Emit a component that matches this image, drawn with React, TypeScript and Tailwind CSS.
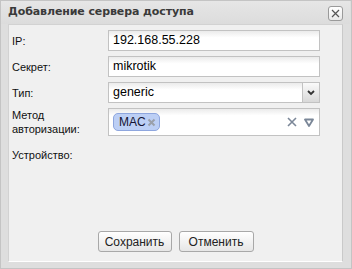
import React from "react";

// Dialog: "add access server"

function Field({ value }: { value: string }) {
  return (
    <div className="h-[21px] flex-1 border border-[#c2c2c2] bg-linear-to-b from-[#ebebeb] to-white to-[35%] flex items-center pl-[4px] text-[12.5px] text-black">
      {value}
    </div>
  );
}

function Row({ label, children }: { label: React.ReactNode; children: React.ReactNode }) {
  return (
    <div className="flex items-center">
      <div className="w-[96px] shrink-0 text-[11px] leading-[14px] text-[#111]">{label}</div>
      {children}
    </div>
  );
}

export default function App() {
  return (
    <div
      className="w-[352px] h-[269px] bg-[#dedede] border border-[#c4c4c4] flex flex-col pl-[7px] pr-[8px] pb-[6px]"
      style={{ fontFamily: '"Liberation Sans", Arial, sans-serif' }}
    >
      {/* Title bar */}
      <div className="h-[23px] flex items-center justify-between bg-linear-to-b from-[#e6e6e6] to-[#dcdcdc] -mx-[7px] pl-[7px] pr-[7px]">
        <span
          className="text-[11px] font-bold text-[#3a3a3a] tracking-[-0.1px]"
          style={{ fontFamily: '"DejaVu Sans", Verdana, sans-serif' }}
        >
          Добавление сервера доступа
        </span>
        <button className="w-[15px] h-[15px] border border-[#9a9a9a] rounded-[3px] bg-linear-to-b from-white to-[#e8e8e8] flex items-center justify-center mt-[1px]">
          <svg width="9" height="9" viewBox="0 0 9 9">
            <path d="M1 1 L8 8 M8 1 L1 8" stroke="#555" strokeWidth="1.2" />
          </svg>
        </button>
      </div>

      {/* Body panel */}
      <div className="flex-1 flex flex-col bg-[#f0f0f0] border border-t-[#d2d2d2] border-l-[#d2d2d2] border-r-[#c9c9c9] border-b-white">
        <div className="flex flex-col gap-[5px] pt-[5px] pl-[3px] pr-[22px]">
          <Row label="IP:">
            <Field value="192.168.55.228" />
          </Row>
          <Row label="Секрет:">
            <Field value="mikrotik" />
          </Row>
          <Row label="Тип:">
            <div className="h-[21px] flex-1 border border-[#c2c2c2] bg-linear-to-b from-[#ebebeb] to-white to-[35%] flex items-center text-[12.5px] text-black">
              <span className="flex-1 pl-[4px]">generic</span>
              <div className="w-[17px] h-full border-l border-[#c2c2c2] bg-linear-to-b from-[#fafafa] to-[#d9d9d9] flex items-center justify-center">
                <svg width="8" height="6" viewBox="0 0 8 6">
                  <path d="M1 1 L4 4 L7 1" stroke="#333" strokeWidth="1.8" fill="none" />
                </svg>
              </div>
            </div>
          </Row>
          <Row
            label={
              <>
                Метод
                <br />
                авторизации:
              </>
            }
          >
            <div className="h-[28px] flex-1 border border-[#c2c2c2] bg-linear-to-b from-[#ebebeb] to-white to-[25%] flex items-center pl-[4px] pr-[5px]">
              <div className="h-[18px] pl-[5px] pr-[3px] rounded-[5px] border border-[#8ea6de] bg-[#bccff5] flex items-center text-[12px] text-[#141432]">
                MAC
                <svg width="9" height="9" viewBox="0 0 9 9" className="ml-[1px]">
                  <path d="M1.5 1.5 L7.5 7.5 M7.5 1.5 L1.5 7.5" stroke="#9aa0aa" strokeWidth="2" />
                </svg>
              </div>
              <div className="flex-1" />
              <svg width="10" height="10" viewBox="0 0 10 10" className="mr-[7px]">
                <path d="M1 1 L9 9 M9 1 L1 9" stroke="#7b8798" strokeWidth="1.6" />
              </svg>
              <svg width="10" height="9" viewBox="0 0 10 9">
                <path d="M1 1.5 H9 L5 8 Z" stroke="#7b8798" strokeWidth="1.8" fill="none" strokeLinejoin="round" />
              </svg>
            </div>
          </Row>
          <div className="mt-[7px] text-[11px] leading-[14px] text-[#111]">Устройство:</div>
        </div>

        {/* Buttons */}
        <div className="mt-auto mb-[9px] flex justify-center gap-[7px]">
          <button className="w-[74px] h-[21px] border border-[#a8a8a8] rounded-[3px] bg-linear-to-b from-white to-[#e6e6e6] text-[12px] text-[#222]">
            Сохранить
          </button>
          <button className="w-[75px] h-[21px] border border-[#a8a8a8] rounded-[3px] bg-linear-to-b from-white to-[#e6e6e6] text-[12px] text-[#222]">
            Отменить
          </button>
        </div>
      </div>
    </div>
  );
}
